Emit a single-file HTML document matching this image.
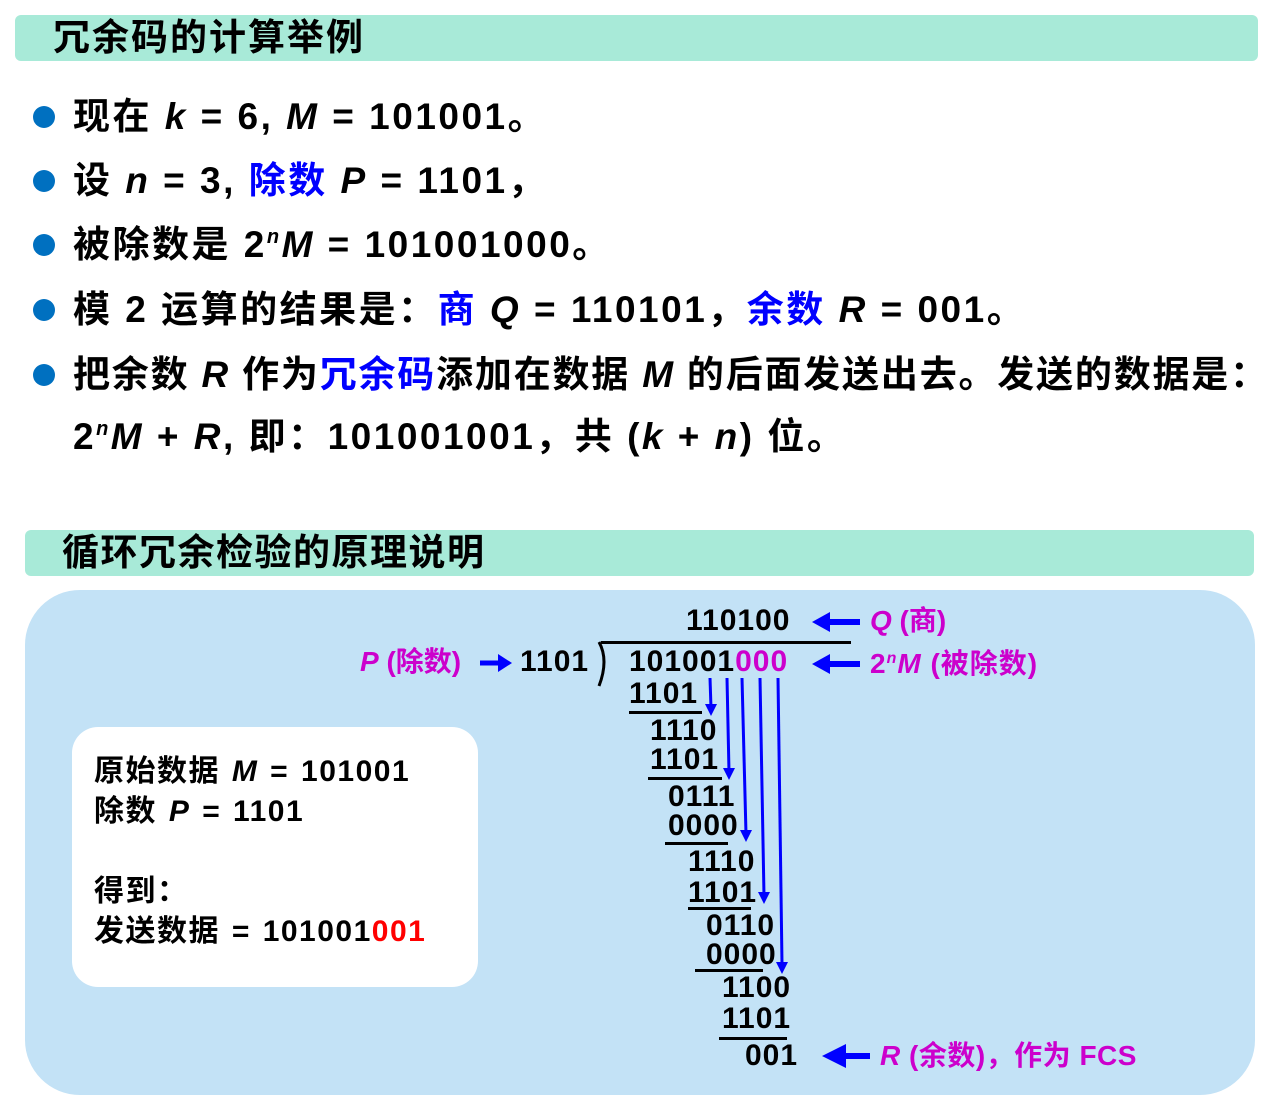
<!DOCTYPE html>
<html><head><meta charset="utf-8"><style>
body{margin:0;width:1284px;height:1105px;background:#fff;position:relative;overflow:hidden;font-family:"Liberation Sans","Noto Sans CJK SC",sans-serif;font-weight:bold;color:#000}
.a{position:absolute;white-space:nowrap}
.hdr{position:absolute;background:#a8ead8;border-radius:6px}
.hdr span{position:absolute;font-size:37px;line-height:46px;top:0}
.bl{position:absolute;left:33px;width:22px;height:22px;border-radius:50%;background:#0070c0}
.ln{position:absolute;left:73px;font-size:37px;line-height:50px;white-space:nowrap;letter-spacing:2.5px;word-spacing:0px}
i{font-style:italic}
.b{color:#0000ff}.m{color:#cc00cc}
.sp{position:relative;top:-14px;font-size:20px;font-style:italic}
.d{position:absolute;font-size:30px;line-height:32px;white-space:nowrap;letter-spacing:1px}
.u{position:absolute;height:3px;background:#000}
</style></head><body>
<div class="hdr" style="left:15px;top:15px;width:1243px;height:46px"><span style="left:38px;letter-spacing:2px">冗余码的计算举例</span></div>
<div class="bl" style="top:106px"></div><div class="ln" style="top:92px">现在 <i>k</i> = 6, <i>M</i> = 101001。</div>
<div class="bl" style="top:170px"></div><div class="ln" style="top:156px">设 <i>n</i> = 3, <span class="b">除数</span> <i>P</i> = 1101，</div>
<div class="bl" style="top:234px"></div><div class="ln" style="top:220px">被除数是 2<span class="sp">n</span><i>M</i> = 101001000。</div>
<div class="bl" style="top:299px"></div><div class="ln" style="top:285px">模 2 运算的结果是：<span class="b">商</span> <i>Q</i> = 110101，<span class="b">余数</span> <i>R</i> = 001。</div>
<div class="bl" style="top:364px"></div><div class="ln" style="top:350px;letter-spacing:1.8px">把余数 <i>R</i> 作为<span class="b">冗余码</span>添加在数据 <i>M</i> 的后面发送出去。发送的数据是：</div>
<div class="ln" style="top:412px">2<span class="sp">n</span><i>M</i> + <i>R</i>, 即：101001001，共 (<i>k</i> + <i>n</i>) 位。</div>

<div class="hdr" style="left:25px;top:530px;width:1229px;height:46px"><span style="left:37px;letter-spacing:1.5px">循环冗余检验的原理说明</span></div>
<div style="position:absolute;left:25px;top:590px;width:1230px;height:505px;background:#c3e2f6;border-radius:55px"></div>
<div style="position:absolute;left:72px;top:727px;width:406px;height:260px;background:#fff;border-radius:26px"></div>
<div class="a" style="left:94px;top:752px;font-size:30px;line-height:40px;letter-spacing:1.5px;word-spacing:2px">原始数据 <i>M</i> = 101001<br>除数 <i>P</i> = 1101<br><br>得到：<br>发送数据 = 101001<span style="color:#f00">001</span></div>

<div class="d" style="left:686px;top:605px">110100</div>
<div class="u" style="left:601px;top:641px;width:250px"></div>
<svg class="a" style="left:595px;top:640px" width="20" height="50"><path d="M4 2 Q14 20 4 46" stroke="#000" stroke-width="3" fill="none"/></svg>
<div class="d" style="left:629px;top:646px">101001<span class="m">000</span></div>
<div class="d" style="left:520px;top:646px">1101</div>
<div class="a m" style="left:360px;top:646px;font-size:28px;line-height:32px"><i>P</i> (除数)</div>
<svg class="a" style="left:478px;top:652px" width="36" height="22"><path d="M2 11H22" stroke="#00f" stroke-width="5"/><path d="M20 2L34 11L20 20Z" fill="#00f"/></svg>
<svg class="a" style="left:810px;top:610px" width="52" height="24"><path d="M16 12H50" stroke="#00f" stroke-width="6"/><path d="M2 12L20 2V22Z" fill="#00f"/></svg>
<div class="a m" style="left:870px;top:605px;font-size:28px;line-height:32px"><i>Q</i> (商)</div>
<svg class="a" style="left:810px;top:652px" width="52" height="24"><path d="M16 12H50" stroke="#00f" stroke-width="6"/><path d="M2 12L20 2V22Z" fill="#00f"/></svg>
<div class="a m" style="left:870px;top:648px;font-size:28px;line-height:32px;letter-spacing:1px">2<span style="position:relative;top:-10px;font-size:16px;font-style:italic">n</span><i>M</i> (被除数)</div>

<div class="d" style="left:629px;top:678px">1101</div><div class="u" style="left:629px;top:711px;width:73px"></div>
<div class="d" style="left:650px;top:715px">1110</div>
<div class="d" style="left:650px;top:744px">1101</div><div class="u" style="left:648px;top:777px;width:74px"></div>
<div class="d" style="left:668px;top:781px">0111</div>
<div class="d" style="left:668px;top:810px">0000</div><div class="u" style="left:665px;top:842px;width:63px"></div>
<div class="d" style="left:688px;top:846px">1110</div>
<div class="d" style="left:688px;top:877px">1101</div><div class="u" style="left:688px;top:907px;width:63px"></div>
<div class="d" style="left:706px;top:910px">0110</div>
<div class="d" style="left:706px;top:939px">0000</div><div class="u" style="left:695px;top:969px;width:68px"></div>
<div class="d" style="left:722px;top:972px">1100</div>
<div class="d" style="left:722px;top:1003px">1101</div><div class="u" style="left:719px;top:1037px;width:68px"></div>
<div class="d" style="left:745px;top:1040px">001</div>

<svg class="a" style="left:0;top:0" width="1284" height="1105">
<g stroke="#00f" stroke-width="3" fill="#00f">
<path d="M710 678L711 708"/><path d="M705 704L711 716L717 704Z" stroke="none"/>
<path d="M727 678L729 772"/><path d="M723 768L729 780L735 768Z" stroke="none"/>
<path d="M742 678L746 834"/><path d="M740 830L746 842L752 830Z" stroke="none"/>
<path d="M760 678L764 896"/><path d="M758 892L764 904L770 892Z" stroke="none"/>
<path d="M778 678L782 964"/><path d="M776 962L782 974L788 962Z" stroke="none"/>
</g>
<path d="M840 1056H870" stroke="#00f" stroke-width="6"/><path d="M822 1056L846 1044V1068Z" fill="#00f"/>
</svg>
<div class="a m" style="left:880px;top:1040px;font-size:28px;line-height:32px;letter-spacing:0.5px"><i>R</i> (余数)，作为 FCS</div>
</body></html>
